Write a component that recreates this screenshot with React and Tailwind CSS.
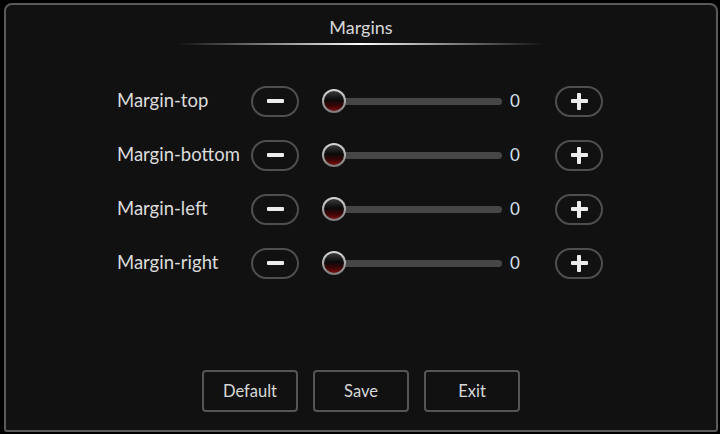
import React from 'react';

const rows = ['Margin-top', 'Margin-bottom', 'Margin-left', 'Margin-right'];

const RoundButton = ({ plus }) => (
  <button className="w-[48px] h-[31px] rounded-full border-2 border-[#4f4f4f] flex items-center justify-center">
    <span className="relative w-[17px] h-[17px] flex items-center justify-center">
      <span className="w-[17px] h-[4px] bg-[#ececec] rounded-[1px]" />
      {plus && <span className="absolute w-[4px] h-[17px] bg-[#ececec] rounded-[1px]" />}
    </span>
  </button>
);

const Slider = () => (
  <div className="relative w-[180px] h-[24px] flex items-center">
    <div className="ml-[11px] h-[7px] flex-1 rounded-full bg-[#464646]" />
    <div className="absolute left-0 top-0 w-[24px] h-[24px] rounded-full p-[2px] bg-[linear-gradient(180deg,#d8d8d8,#7a7a7a)]">
      <div className="w-full h-full rounded-full bg-[linear-gradient(180deg,#3a3a3a_0%,#0a0a0a_45%,#3c0505_75%,#7a1010_100%)]" />
    </div>
  </div>
);

const Row = ({ label }) => (
  <div className="flex items-center h-[54px]">
    <div className="w-[134px] text-[18.5px] text-[#dcdcdc] whitespace-nowrap">{label}</div>
    <RoundButton />
    <div className="ml-[23px]">
      <Slider />
    </div>
    <div className="ml-[8px] w-[45px] text-[17px] text-[#d6e2ee]">0</div>
    <RoundButton plus />
  </div>
);

const App = () => {
  return (
    <div
      className="w-[720px] h-[434px] bg-black pl-[4px] pr-[2px] pt-[3px] pb-[2px]"
      style={{ fontFamily: 'Lato, "Open Sans", sans-serif' }}
    >
      <div className="w-full h-full bg-[#111111] border-2 border-[#5a5a5a] rounded-t-[8px] rounded-b-[3px] flex flex-col">
        {/* Title */}
        <div className="pt-[10px] text-center text-[18px] text-[#d8d8d8] leading-[24px]">Margins</div>
        <div className="mt-[4px] mx-auto w-[366px] h-[2px] bg-[linear-gradient(90deg,transparent,#9a9a9a_30%,#ffffff_50%,#9a9a9a_70%,transparent)]" />

        {/* Rows */}
        <div className="mt-[29px] ml-[111px] flex flex-col">
          {rows.map((r) => (
            <Row key={r} label={r} />
          ))}
        </div>

        {/* Bottom buttons */}
        <div className="mt-auto mb-[18px] flex justify-center gap-[15px]">
          {['Default', 'Save', 'Exit'].map((b) => (
            <button
              key={b}
              className="w-[96px] h-[42px] rounded-[4px] border-2 border-[#555555] text-[16.5px] text-[#d8d8d8]"
            >
              {b}
            </button>
          ))}
        </div>
      </div>
    </div>
  );
};

export default App;
